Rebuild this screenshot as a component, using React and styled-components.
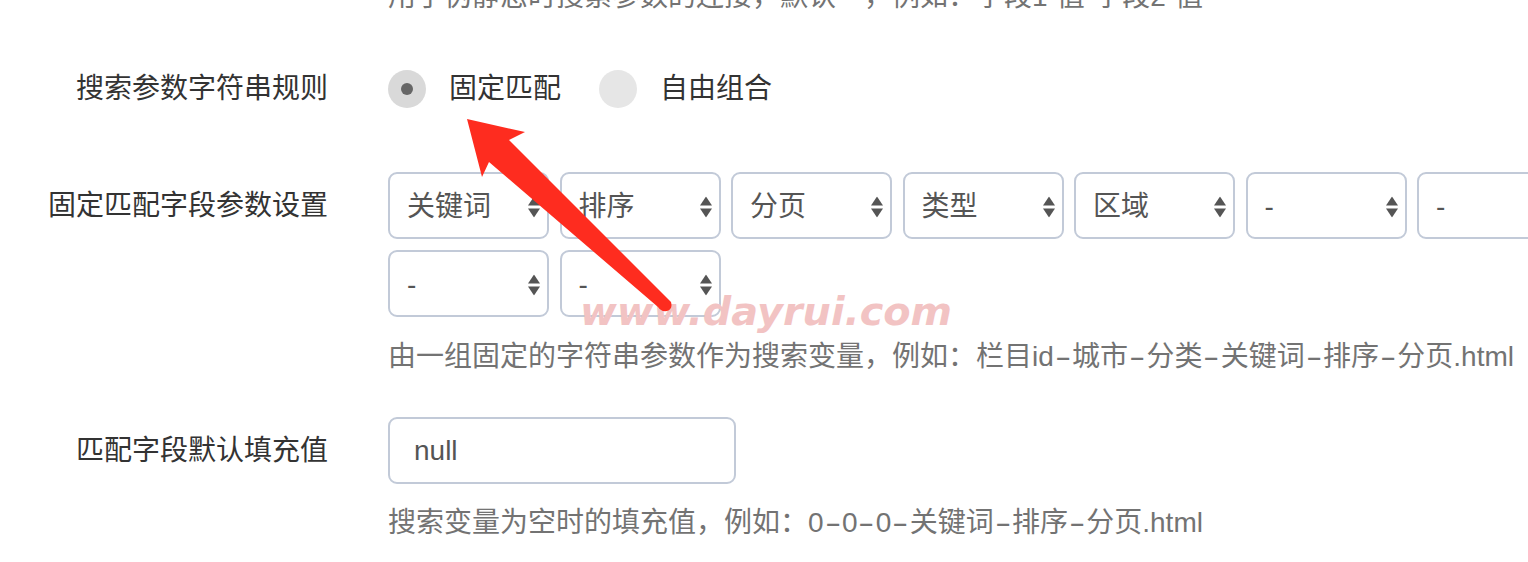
import React from 'react';
import styled, { createGlobalStyle } from 'styled-components';

const GlobalStyle = createGlobalStyle`
  html, body { margin: 0; padding: 0; background: #fff; overflow: hidden; }
  body { font-family: "Liberation Sans", "Noto Sans CJK SC", sans-serif; }
  * { box-sizing: border-box; }
`;

const Root = styled.div`
  position: relative;
  width: 1528px;
  height: 562px;
  overflow: hidden;
  display: flex;
  flex-direction: column;
`;

const Form = styled.div`
  margin-top: -23px;
  display: flex;
  flex-direction: column;
`;

const FormGroup = styled.div`
  display: grid;
  grid-template-columns: 328px auto;
  column-gap: 60px;
  align-items: start;
  margin-bottom: ${p => (p.$mb ?? 40)}px;
`;

const Label = styled.label`
  font-size: 28px;
  height: 67px;
  line-height: 68px;
  color: #333;
  text-align: right;
  white-space: nowrap;
  &:empty {
    height: 0;
  }
`;

const Controls = styled.div`
  display: flex;
  flex-direction: column;
  align-items: flex-start;
  min-width: 0;
`;

const Help = styled.div`
  font-size: 28px;
  line-height: 40px;
  color: #737373;
  white-space: nowrap;
  margin-top: ${p => (p.$mt ?? 0)}px;
`;

const Dash = styled.span`
  display: inline-block;
  width: 18.3px;
  text-align: center;
  transform: scaleX(1.75);
`;

const RadioList = styled.div`
  display: flex;
  align-items: center;
  height: 67px;
`;

const RadioItem = styled.label`
  display: inline-flex;
  align-items: center;
  margin-right: 38px;
  font-size: 28px;
  line-height: 38px;
  color: #333;
  cursor: pointer;
`;

const RadioCircle = styled.span`
  width: 38px;
  height: 38px;
  border-radius: 50%;
  background: ${p => (p.$checked ? '#d9d9d9' : '#e6e6e6')};
  display: flex;
  align-items: center;
  justify-content: center;
  margin-right: 23px;
  flex-shrink: 0;
  &::after {
    content: '';
    width: 12px;
    height: 12px;
    border-radius: 50%;
    background: #666;
    display: ${p => (p.$checked ? 'block' : 'none')};
  }
`;

const SelectGrid = styled.div`
  display: flex;
  flex-wrap: wrap;
  width: 1260px;
  column-gap: 10.5px;
  row-gap: 11px;
`;

const SelectWrap = styled.div`
  position: relative;
  width: 161px;
  height: 67px;
`;

const Select = styled.select`
  appearance: none;
  -webkit-appearance: none;
  width: 100%;
  height: 100%;
  border: 2px solid #c2cad8;
  border-radius: 9px;
  background: #fff;
  padding: 2px 36px 0 17px;
  font-family: inherit;
  font-size: 28px;
  color: #555;
  outline: none;
`;

const SelectArrows = styled.svg`
  position: absolute;
  right: 9px;
  top: 50%;
  transform: translateY(-45%);
  width: 12px;
  height: 21px;
  pointer-events: none;
`;

const TextInput = styled.input`
  width: 348px;
  height: 67px;
  border: 2px solid #c2cad8;
  border-radius: 9px;
  padding: 0 24px;
  font-family: inherit;
  font-size: 28px;
  color: #555;
  outline: none;
  background: #fff;
`;

const Watermark = styled.div`
  position: absolute;
  left: 580px;
  top: 292px;
  font-family: "DejaVu Sans", sans-serif;
  font-weight: bold;
  font-style: italic;
  font-size: 39.8px;
  line-height: 1;
  color: #f2c3c3;
  white-space: nowrap;
  pointer-events: none;
`;

const Annotation = styled.svg`
  position: absolute;
  left: 0;
  top: 0;
  width: 1528px;
  height: 562px;
  pointer-events: none;
`;

const fields = ['关键词', '排序', '分页', '类型', '区域', '-', '-', '-', '-'];

function Dashed({ text }) {
  const parts = text.split('-');
  return parts.map((p, i) => (
    <React.Fragment key={i}>
      {p}
      {i < parts.length - 1 && <Dash>-</Dash>}
    </React.Fragment>
  ));
}

function FieldSelect({ label }) {
  return (
    <SelectWrap>
      <Select defaultValue="v">
        <option value="v">{label}</option>
      </Select>
      <SelectArrows viewBox="0 0 12 21">
        <polygon points="6,0 12,9 0,9" fill="#555" />
        <polygon points="0,12 12,12 6,21" fill="#555" />
      </SelectArrows>
    </SelectWrap>
  );
}

export default function App() {
  return (
    <Root>
      <GlobalStyle />
      <Form>
        <FormGroup $mb={38}>
          <Label />
          <Controls>
            <Help>用于伪静态时搜索参数的连接，默认“-”，例如：字段1-值-字段2-值</Help>
          </Controls>
        </FormGroup>

        <FormGroup $mb={50}>
          <Label>搜索参数字符串规则</Label>
          <Controls>
            <RadioList>
              <RadioItem>
                <RadioCircle $checked />
                固定匹配
              </RadioItem>
              <RadioItem>
                <RadioCircle />
                自由组合
              </RadioItem>
            </RadioList>
          </Controls>
        </FormGroup>

        <FormGroup $mb={40}>
          <Label>固定匹配字段参数设置</Label>
          <Controls>
            <SelectGrid>
              {fields.map((f, i) => (
                <FieldSelect key={i} label={f} />
              ))}
            </SelectGrid>
            <Help $mt={20}>
              <Dashed text="由一组固定的字符串参数作为搜索变量，例如：栏目id-城市-分类-关键词-排序-分页.html" />
            </Help>
          </Controls>
        </FormGroup>

        <FormGroup $mb={0}>
          <Label>匹配字段默认填充值</Label>
          <Controls>
            <TextInput defaultValue="null" />
            <Help $mt={19}>
              <Dashed text="搜索变量为空时的填充值，例如：0-0-0-关键词-排序-分页.html" />
            </Help>
          </Controls>
        </FormGroup>
      </Form>

      <Watermark>www.dayrui.com</Watermark>
      <Annotation viewBox="0 0 1528 562">
        <path
          d="M467 119 L525 132 L509 140 L671 302 Q673 309 667 311 Q661 312 658 307 L489 162 L482 177 Z"
          fill="#fe2c1f"
        />
      </Annotation>
    </Root>
  );
}
